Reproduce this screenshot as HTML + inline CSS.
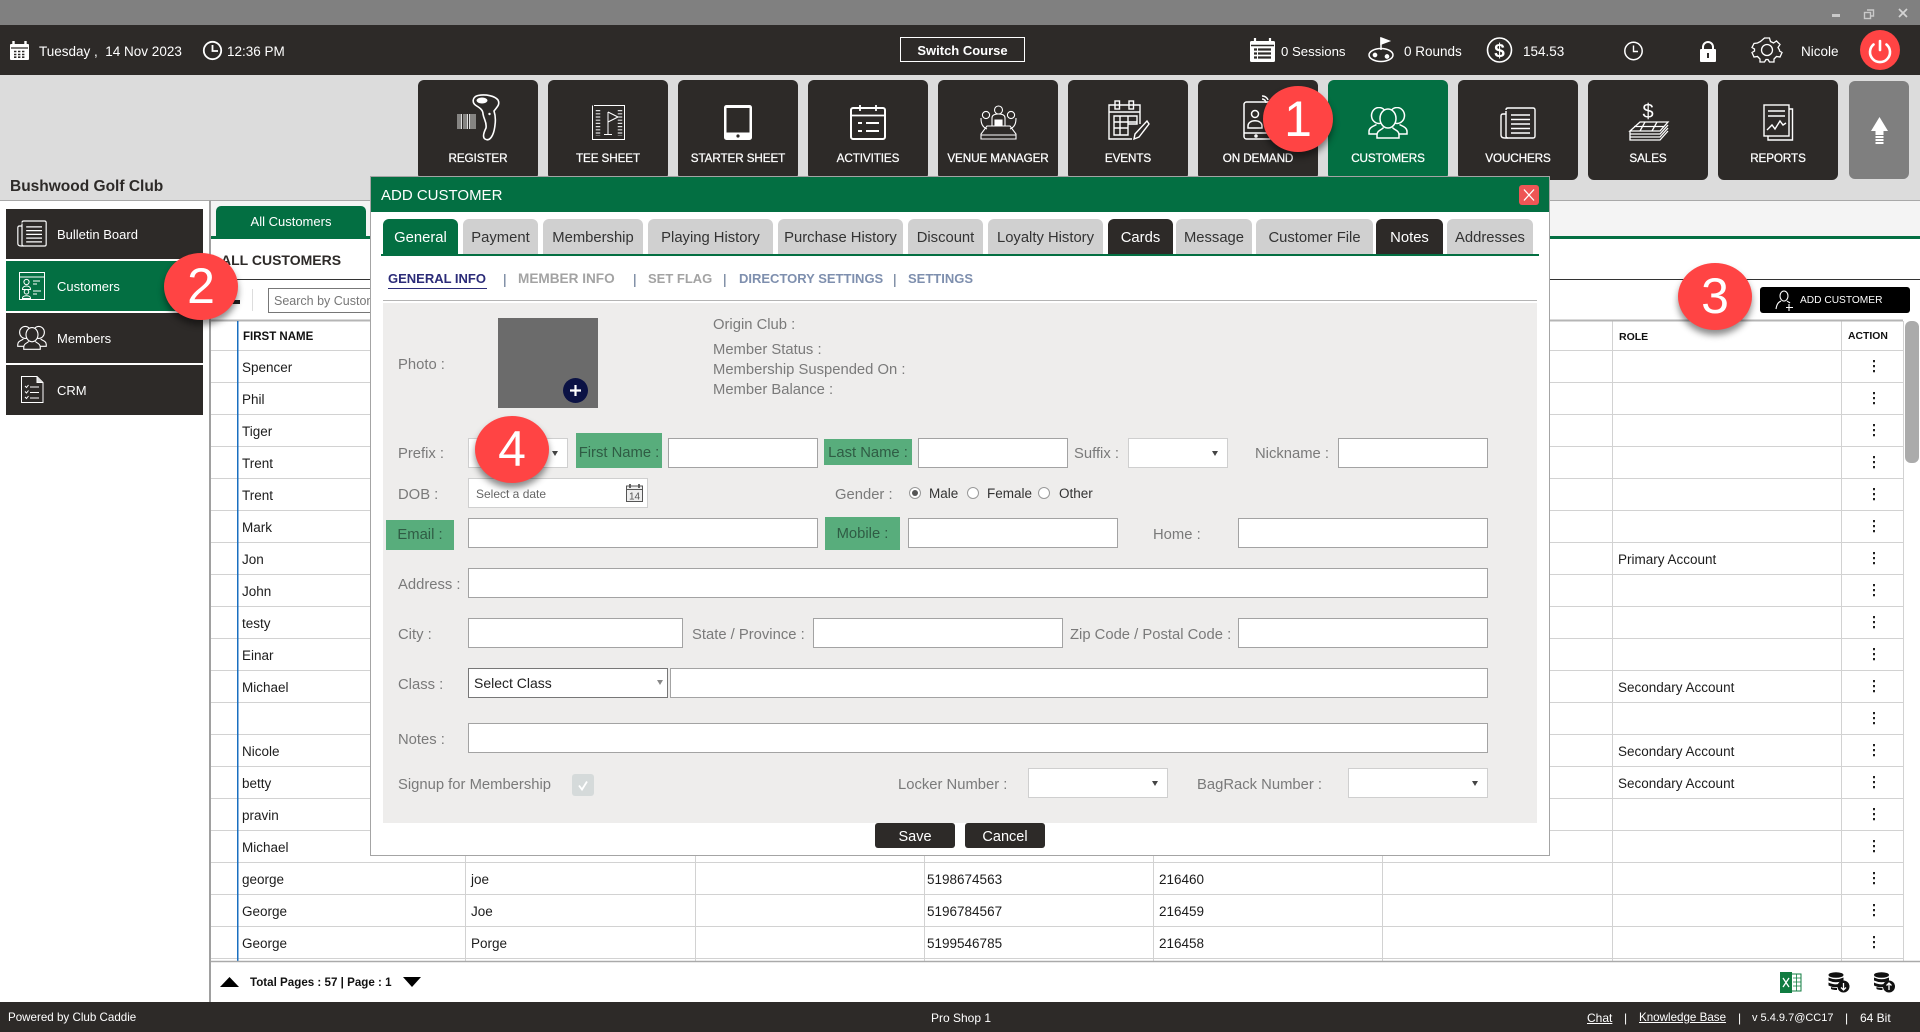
<!DOCTYPE html>
<html><head><meta charset="utf-8"><title>Add Customer</title>
<style>
html,body{margin:0;padding:0;width:1920px;height:1032px;overflow:hidden;background:#fff}
body{font-family:"Liberation Sans",sans-serif;position:relative;color:#222}
div{box-sizing:border-box}
.a{position:absolute}
.t{position:absolute;white-space:nowrap;line-height:20px;height:20px;margin-top:1px}
.w{color:#fff}
.nb{position:absolute;top:80px;width:120px;height:100px;background:#2d2a28;border-radius:6px;color:#fff;font-size:11.7px;letter-spacing:-.1px;text-align:center;padding-top:70px;line-height:18px;-webkit-text-stroke:.25px #fff}
.side{position:absolute;left:6px;width:197px;height:50px;background:#2d2a28;color:#fff;font-size:13px;line-height:52px;padding-left:51px}
.r{font-size:13.5px;color:#1c1c1c}
.tab{position:absolute;top:219px;height:35px;background:#d0d0d0;border-radius:6px 6px 0 0;color:#333;font-size:14.8px;line-height:39px;text-align:center;white-space:nowrap}
.tab.d{background:#2d2a28;color:#fff}
.l{color:#7a7a7a;font-size:14.8px}
.g{position:absolute;background:#58ad7c;color:#2f5c44;font-size:14.8px;display:flex;align-items:center;justify-content:center;white-space:nowrap}
.i{position:absolute;height:30px;background:#fff;border:1px solid #a3a3a3}
.s{border-color:#cfcfcf}
.c{position:absolute;width:0;height:0;border-left:3px solid transparent;border-right:3px solid transparent;border-top:5px solid #444}
.sub{position:absolute;top:269px;font-size:13px;font-weight:bold;line-height:20px;white-space:nowrap}
.bar{position:absolute;top:269px;font-size:14px;color:#5c6f8c;line-height:20px}
.rb{position:absolute;width:12px;height:12px;border-radius:50%;border:1px solid #999;background:#fff;top:487px}
.btn{position:absolute;top:823px;height:25px;width:80px;background:#2d2a28;border-radius:3px;color:#fff;font-size:14.5px;line-height:28px;text-align:center}
.n{position:absolute;background:#ff4444;border-radius:50%;color:#fff;font-size:50px;text-align:center;box-shadow:0 5px 7px rgba(0,0,0,.45);width:74px;height:67px;line-height:67px;z-index:20}
</style></head><body>

<!-- top bars -->
<div class="a" style="left:0;top:0;width:1920px;height:25px;background:#808080"></div>
<div class="a" style="left:0;top:25px;width:1920px;height:50px;background:#2d2a28"></div>
<div class="a" style="left:0;top:75px;width:1920px;height:125px;background:#dcdcdc"></div>
<div class="a" style="left:0;top:200px;width:1920px;height:1px;background:#a8a8a8"></div>

<div class="t w" style="left:39px;top:41px;font-size:13.5px">Tuesday ,&nbsp; 14 Nov 2023</div>
<div class="t w" style="left:227px;top:41px;font-size:13.5px">12:36 PM</div>
<div class="a w" style="left:900px;top:37px;width:125px;height:25px;border:1px solid #fff;font-size:13px;font-weight:bold;text-align:center;line-height:25px">Switch Course</div>
<div class="t w" style="left:1281px;top:41px;font-size:13.2px">0 Sessions</div>
<div class="t w" style="left:1404px;top:41px;font-size:13.5px">0 Rounds</div>
<div class="t w" style="left:1523px;top:41px;font-size:13.5px">154.53</div>
<div class="t w" style="left:1801px;top:41px;font-size:13.5px">Nicole</div>
<div class="a" style="left:1860px;top:30px;width:40px;height:40px;border-radius:50%;background:#ff4444"></div>

<div class="t" style="left:10px;top:176px;font-size:15.5px;font-weight:bold;color:#2d2a28">Bushwood Golf Club</div>

<!-- nav buttons -->
<div class="nb" style="left:418px">REGISTER</div>
<div class="nb" style="left:548px">TEE SHEET</div>
<div class="nb" style="left:678px">STARTER SHEET</div>
<div class="nb" style="left:808px">ACTIVITIES</div>
<div class="nb" style="left:938px">VENUE MANAGER</div>
<div class="nb" style="left:1068px">EVENTS</div>
<div class="nb" style="left:1198px">ON DEMAND</div>
<div class="nb" style="left:1328px;background:#036f42">CUSTOMERS</div>
<div class="nb" style="left:1458px">VOUCHERS</div>
<div class="nb" style="left:1588px">SALES</div>
<div class="nb" style="left:1718px">REPORTS</div>
<div class="a" style="left:1849px;top:81px;width:60px;height:98px;background:#7f7f7f;border-radius:6px"></div>

<!-- sidebar -->
<div class="a" style="left:209px;top:200px;width:2px;height:802px;background:#a0a0a0"></div>
<div class="side" style="top:209px">Bulletin Board</div>
<div class="side" style="top:261px;background:#036f42">Customers</div>
<div class="side" style="top:313px">Members</div>
<div class="side" style="top:365px">CRM</div>

<!-- content header -->
<div class="a" style="left:211px;top:201px;width:1709px;height:35px;background:#f4f4f4"></div>
<div class="a" style="left:211px;top:236px;width:1709px;height:3px;background:#036f42"></div>
<div class="a w" style="left:216px;top:206px;width:150px;height:31px;background:#036f42;border-radius:5px 5px 0 0;font-size:13px;text-align:center;line-height:32px">All Customers</div>
<div class="t" style="left:221px;top:249px;font-size:14px;font-weight:bold;color:#2d2a28">ALL CUSTOMERS</div>
<div class="a" style="left:211px;top:279px;width:1709px;height:1px;background:#333"></div>
<div class="a" style="left:252px;top:289px;width:1px;height:22px;background:#ddd"></div>
<div class="a" style="left:268px;top:288px;width:160px;height:25px;border:1px solid #777;color:#777;font-size:12.5px;line-height:24px;padding-left:5px;white-space:nowrap;overflow:hidden">Search by Customer</div>
<div class="a" style="left:232px;top:300px;width:8px;height:4px;background:#222"></div>
<div class="a" style="left:1760px;top:287px;width:150px;height:26px;background:#000;border-radius:3px;color:#fff;font-size:10.2px;line-height:27px;padding-left:40px;white-space:nowrap">ADD CUSTOMER</div>

<!-- grid -->
<svg class="a" style="left:0;top:0" width="1920" height="1032">
<g stroke="#d2d2d2" stroke-width="1" shape-rendering="crispEdges">
<path d="M211 350.5H1903M211 382.5H1903M211 414.5H1903M211 446.5H1903M211 478.5H1903M211 510.5H1903M211 542.5H1903M211 574.5H1903M211 606.5H1903M211 638.5H1903M211 670.5H1903M211 702.5H1903M211 734.5H1903M211 766.5H1903M211 798.5H1903M211 830.5H1903M211 862.5H1903M211 894.5H1903M211 926.5H1903M211 958.5H1903"/>
<path d="M465.5 321V961M695.5 321V961M924.5 321V961M1153.5 321V961M1382.5 321V961M1612.5 321V961M1841.5 321V961M1903.5 321V961"/>
</g>
<path d="M211 320.5H1903" stroke="#b5b5b5" stroke-width="2"/>
<path d="M237.5 321V961" stroke="#1a6fc0" stroke-width="1.5" shape-rendering="crispEdges"/>
<path d="M211 961.5H1920" stroke="#aaa" stroke-width="1.5"/>
<!-- scrollbar -->
<rect x="1905" y="321" width="14" height="142" rx="6" fill="#ababab"/>
</svg>

<div class="t" style="left:243px;top:326px;font-size:11.5px;font-weight:bold;color:#111">FIRST NAME</div>
<div class="t" style="left:1619px;top:326px;font-size:10.5px;font-weight:bold;color:#111">ROLE</div>
<div class="t" style="left:1848px;top:326px;font-size:10.4px;font-weight:bold;color:#111">ACTION</div>

<div class="t r" style="left:242px;top:357px">Spencer</div>
<div class="t r" style="left:242px;top:389px">Phil</div>
<div class="t r" style="left:242px;top:421px">Tiger</div>
<div class="t r" style="left:242px;top:453px">Trent</div>
<div class="t r" style="left:242px;top:485px">Trent</div>
<div class="t r" style="left:242px;top:517px">Mark</div>
<div class="t r" style="left:242px;top:549px">Jon</div>
<div class="t r" style="left:242px;top:581px">John</div>
<div class="t r" style="left:242px;top:613px">testy</div>
<div class="t r" style="left:242px;top:645px">Einar</div>
<div class="t r" style="left:242px;top:677px">Michael</div>
<div class="t r" style="left:242px;top:741px">Nicole</div>
<div class="t r" style="left:242px;top:773px">betty</div>
<div class="t r" style="left:242px;top:805px">pravin</div>
<div class="t r" style="left:242px;top:837px">Michael</div>
<div class="t r" style="left:242px;top:869px">george</div>
<div class="t r" style="left:242px;top:901px">George</div>
<div class="t r" style="left:242px;top:933px">George</div>
<div class="t r" style="left:471px;top:869px">joe</div>
<div class="t r" style="left:471px;top:901px">Joe</div>
<div class="t r" style="left:471px;top:933px">Porge</div>
<div class="t r" style="left:927px;top:869px">5198674563</div>
<div class="t r" style="left:927px;top:901px">5196784567</div>
<div class="t r" style="left:927px;top:933px">5199546785</div>
<div class="t r" style="left:1159px;top:869px">216460</div>
<div class="t r" style="left:1159px;top:901px">216459</div>
<div class="t r" style="left:1159px;top:933px">216458</div>
<div class="t r" style="left:1618px;top:549px">Primary Account</div>
<div class="t r" style="left:1618px;top:677px">Secondary Account</div>
<div class="t r" style="left:1618px;top:741px">Secondary Account</div>
<div class="t r" style="left:1618px;top:773px">Secondary Account</div>

<svg class="a" style="left:1870px;top:350px" width="8" height="610"><g fill="#222">
<path id="d" d="M3 10h2v2.2H3zM3 15h2v2.2H3zM3 20h2v2.2H3z"/>
<use href="#d" y="32"/><use href="#d" y="64"/><use href="#d" y="96"/><use href="#d" y="128"/><use href="#d" y="160"/><use href="#d" y="192"/><use href="#d" y="224"/><use href="#d" y="256"/><use href="#d" y="288"/><use href="#d" y="320"/><use href="#d" y="352"/><use href="#d" y="384"/><use href="#d" y="416"/><use href="#d" y="448"/><use href="#d" y="480"/><use href="#d" y="512"/><use href="#d" y="544"/><use href="#d" y="576"/>
</g></svg>

<!-- pagination -->
<svg class="a" style="left:215px;top:970px" width="215" height="24">
<path d="M5 17L14.5 7L24 17Z" fill="#000"/><path d="M188 7H206L197 17Z" fill="#000"/></svg>
<div class="t" style="left:250px;top:973px;margin-top:0;font-size:11.6px;font-weight:bold;color:#111">Total Pages : 57 | Page : 1</div>

<!-- footer -->
<div class="a" style="left:0;top:1002px;width:1920px;height:30px;background:#2d2a28"></div>
<div class="t w" style="left:8px;top:1008px;margin-top:0;font-size:11.6px">Powered by Club Caddie</div>
<div class="t w" style="left:931px;top:1008px;margin-top:0;font-size:12px">Pro Shop 1</div>
<div class="t w" style="left:1587px;top:1008px;margin-top:0;font-size:12px"><u>Chat</u></div>
<div class="t w" style="left:1624px;top:1008px;margin-top:0;font-size:12px">|</div>
<div class="t w" style="left:1639px;top:1008px;margin-top:0;font-size:11.6px"><u>Knowledge Base</u></div>
<div class="t w" style="left:1738px;top:1008px;margin-top:0;font-size:12px">|</div>
<div class="t w" style="left:1752px;top:1008px;margin-top:0;font-size:11px">v 5.4.9.7@CC17</div>
<div class="t w" style="left:1845px;top:1008px;margin-top:0;font-size:12px">|</div>
<div class="t w" style="left:1860px;top:1008px;margin-top:0;font-size:12px">64 Bit</div>

<!-- icons layer -->
<svg class="a" style="left:0;top:0" width="1920" height="1032">
<defs>
<symbol id="news" viewBox="0 0 36 32"><g fill="none" stroke="#fff" stroke-width="1.4"><path d="M6 4V29Q6 31 8 31H33Q35 31 35 29V3Q35 1 33 1H8Q6 1 6 3"/><path d="M6 7H3Q1 7 1 9V28Q1 31 5 31H8"/><path stroke-width="1.5" d="M11 8H30M11 12.5H30M11 17H30M11 21.5H30M11 26H30"/></g></symbol>
<symbol id="ppl" viewBox="0 0 40 32"><g stroke="#fff" stroke-width="1.5" fill="none">
<ellipse cx="11" cy="8.5" rx="7.5" ry="8"/><ellipse cx="29" cy="8.5" rx="7.5" ry="8"/>
<path d="M9 27H1V24.5C1 20.5 5 19.5 8.5 17.5M31 27H39V24.5C39 20.5 35 19.5 31.5 17.5"/>
<ellipse cx="20" cy="11.5" rx="8" ry="9.5" fill="currentColor"/>
<path d="M15.5 20.5C14 23 9 23 9 28V31H31V28C31 23 26 23 24.5 20.5"/>
</g></symbol>
</defs>

<!-- header icons -->
<g>
<rect x="10" y="44" width="19" height="16" rx="1" fill="#fff"/>
<path d="M13.5 41v5M25.5 41v5" stroke="#fff" stroke-width="2.4"/>
<path d="M11 48H28" stroke="#2d2a28" stroke-width="1.2"/>
<path d="M14 51.5h11M14 54.5h11M14 57.2h11" stroke="#2d2a28" stroke-width="1.6" stroke-dasharray="2.4 1.6"/>
</g>
<circle cx="212.5" cy="50.5" r="8.7" fill="none" stroke="#fff" stroke-width="1.8"/>
<path d="M212.5 45V51H218" fill="none" stroke="#fff" stroke-width="1.8"/>

<g>
<rect x="1250" y="41" width="25" height="21" rx="1.5" fill="#fff"/>
<path d="M1255 38v6M1270 38v6" stroke="#fff" stroke-width="2.2"/>
<path d="M1251 45.5H1274" stroke="#2d2a28" stroke-width="1.4"/>
<path d="M1254 49.5H1271M1254 53.5H1271M1254 57.5H1271" stroke="#2d2a28" stroke-width="2.2"/>
<path d="M1257.5 48V59" stroke="#fff" stroke-width="1"/>
</g>
<g fill="none" stroke="#fff" stroke-width="1.5">
<ellipse cx="1381" cy="55" rx="12" ry="6.5"/>
<path d="M1381 50V38"/>
<path d="M1381 38L1389 41L1381 44Z" fill="#fff"/>
<circle cx="1375" cy="55" r="1.6" fill="#fff"/><circle cx="1387" cy="56.5" r="1.6" fill="#fff"/>
</g>
<circle cx="1499.5" cy="50" r="12" fill="none" stroke="#fff" stroke-width="1.6"/>
<text x="1499.5" y="57" text-anchor="middle" fill="#fff" font-size="19" font-weight="bold" font-family="Liberation Sans">$</text>
<circle cx="1633.5" cy="51" r="8.7" fill="none" stroke="#fff" stroke-width="1.5"/>
<path d="M1633.5 45.5V51.5H1638" fill="none" stroke="#fff" stroke-width="1.4"/>
<path d="M1703 50V47a5 5 0 0 1 10 0V50" fill="none" stroke="#fff" stroke-width="2"/>
<rect x="1700" y="49" width="16" height="13" rx="1" fill="#fff"/>
<rect x="1707" y="53" width="2" height="5" fill="#2d2a28"/>
<g fill="none" stroke="#fff" stroke-width="1.3">
<circle cx="1767" cy="50" r="5.5"/>
<path d="M1764.5 38H1769.5L1770.5 41.5L1773.5 43L1776.5 41L1780 44.5L1778 47.5L1779.5 50V51L1782 52.5L1780 57L1776.5 56.5L1774 59L1774 62H1769.5L1768 59.5H1766L1764.5 62H1760L1760 59L1757.5 56.5L1754 57L1752 52.5L1754.5 51V49L1752 47.5L1754 43.5L1757.5 43L1760.5 41.5Z"/>
</g>
<path d="M1880 41V50" stroke="#fff" stroke-width="2.6" stroke-linecap="round"/>
<path d="M1873.5 44.5a10 10 0 1 0 13 0" fill="none" stroke="#fff" stroke-width="2.6" stroke-linecap="round"/>

<!-- window controls -->
<rect x="1832" y="14" width="8" height="3" fill="#c9c9c9"/>
<g fill="none" stroke="#c9c9c9" stroke-width="1.4"><rect x="1864.5" y="12.5" width="6" height="6"/><path d="M1867 10H1873.5V16H1871"/></g>
<path d="M1899 9L1907 17M1907 9L1899 17" stroke="#d4d4d4" stroke-width="1.7"/>

<!-- register -->
<path d="M458 114V129M460 114V129M461.5 114V129M464 114V129M466 114V129M467.5 114V129M469.5 114V129M471 114V129M473 114V129M475 114V129" stroke="#ddd" stroke-width="1"/>
<path d="M478 95.5C472 97 472 103 476 105.5C480 108 483 110 483 114C484 120 487 122 486 128C484 132 482 137 485 139C490 142 494 135 495 125C496 118 495 114 494 111C498 106 500 104 498 100C495 96 486 94 478 95.5Z" fill="none" stroke="#fff" stroke-width="1.6"/>
<ellipse cx="482" cy="100.5" rx="5.5" ry="3" fill="#fff"/>
<circle cx="489.5" cy="114" r="1.2" fill="#fff"/>

<!-- tee sheet -->
<path d="M594 105.5H624.5V139.5H592.5V105.5" fill="none" stroke="#fff" stroke-width="1"/>
<path d="M608 112V134M604 134.5H612" stroke="#fff" stroke-width="1"/>
<path d="M608 112L618 117L608 122" fill="none" stroke="#fff" stroke-width="1.1"/>
<path d="M598 110V136M620 110V136" stroke="#ddd" stroke-width="4.5" stroke-dasharray="1.2 2"/>

<!-- starter -->
<rect x="724" y="105" width="28" height="35" rx="2.5" fill="#fff"/>
<rect x="726.5" y="108" width="23" height="24.5" fill="#2d2a28"/>
<circle cx="738" cy="136" r="1.6" fill="#2d2a28"/>

<!-- activities -->
<rect x="851" y="108" width="34" height="31" rx="2" fill="none" stroke="#fff" stroke-width="2"/>
<path d="M851 115.5H885M860 105V111M876 105V111" stroke="#fff" stroke-width="1.8"/>
<path d="M858 123H862M866 123H879M858 131H862M866 131H879" stroke="#fff" stroke-width="2"/>

<!-- venue -->
<g fill="none" stroke="#fff" stroke-width="1.1">
<circle cx="986" cy="115" r="3.6"/><circle cx="998.5" cy="110" r="4"/><circle cx="1011" cy="115" r="3.6"/>
<path d="M992 126V118C992 115 995 114 998.5 114C1002 114 1005 115 1005 118V126"/>
<path d="M981 118C981 123 982 127 987 129M1016 118C1016 123 1015 127 1010 129"/>
<path d="M987 126H1010L1016 134V139H981V134Z"/>
<path d="M981 135H1016"/>
<path d="M995 120H1002V126H995Z" fill="#fff"/>
</g>

<!-- events -->
<g fill="none" stroke="#fff" stroke-width="1.4">
<path d="M1140 124V105H1109V139H1132"/>
<path d="M1109 112H1140"/>
<rect x="1115" y="101" width="4.5" height="8"/><rect x="1129" y="101" width="4.5" height="8"/>
<path d="M1114 116H1137V124H1128V135H1114ZM1114 122H1137M1114 128H1128M1120 116V135M1128 116V124"/>
<path d="M1147 121L1149 124L1139 137L1134 139L1135 134Z"/>
</g>

<!-- on demand -->
<g fill="none" stroke="#fff" stroke-width="1.5">
<rect x="1244" y="102" width="28" height="37" rx="2.5"/>
<path d="M1244 133H1272"/><circle cx="1256" cy="136" r="1"/>
<circle cx="1255" cy="114" r="3.5"/><path d="M1248 126C1248 119 1262 119 1262 126V128H1248Z"/>
<path d="M1262 96A6 6 0 0 1 1268 100M1262 99A4 4 0 0 1 1266 103"/>
</g>

<use href="#ppl" x="1368" y="107" width="40" height="32" color="#036f42"/>
<use href="#news" x="1500" y="107" width="36" height="32"/>

<!-- sales -->
<text x="1648" y="118" text-anchor="middle" fill="#fff" font-size="20" font-family="Liberation Sans">$</text>
<g fill="none" stroke="#fff" stroke-width="1.3">
<path d="M1640 122H1668L1660 131H1630Z"/>
<path d="M1630 131V134H1660L1668 125M1630 134V137H1660L1668 128M1630 137V140H1660L1668 131"/>
<path d="M1640 131L1645 122M1652 131L1657 122M1634 126.5H1664"/>
</g>

<!-- reports -->
<g fill="none" stroke="#fff" stroke-width="1.4">
<rect x="1764" y="105" width="25" height="31"/>
<path d="M1789 109H1792.5V140H1768V136"/>
<path d="M1768 111H1785M1768 116H1785"/>
<path d="M1767 130L1772 125L1775 129L1780 121L1783 125L1786 123"/>
</g>

<!-- arrow -->
<path d="M1879.5 117L1888 131H1883.5V135H1875.5V131H1871Z" fill="#fff"/>
<path d="M1875.5 137H1883.5M1875.5 140H1883.5M1875.5 143H1883.5" stroke="#fff" stroke-width="2"/>

<!-- sidebar icons -->
<use href="#news" x="17" y="220" width="30" height="27"/>
<g fill="none" stroke="#fff" stroke-width="1">
<rect x="19.5" y="272.5" width="25" height="27"/>
<path d="M19.5 277H44.5"/>
<circle cx="26.5" cy="282" r="2.6"/><path d="M22.5 289C22.5 285 30.5 285 30.5 289V289.5H22.5Z"/>
<circle cx="26.5" cy="291.8" r="2.3"/><path d="M22.5 298C22.5 295 30.5 295 30.5 298V298.5H22.5Z"/>
<path d="M33 281H40M33 284H37M33 291H41M33 294H37"/>
</g>
<use href="#ppl" x="17" y="325" width="30" height="26" color="#2d2a28"/>
<g fill="none" stroke="#fff" stroke-width="1">
<path d="M21.5 376.5H37L43 382.5V402.5H21.5Z"/>
<path d="M37 376.5V382.5H43" fill="#ddd"/>
<path d="M25 386L26.5 387.5L28.5 385M25 391.5L26.5 393L28.5 390.5M25 397L26.5 398.5L28.5 396M30 387H39M30 392.5H39M30 398H39"/>
</g>

<!-- add customer icon -->
<g fill="none" stroke="#fff" stroke-width="1.1">
<ellipse cx="1784" cy="296" rx="4" ry="5"/>
<path d="M1776 309C1777 303 1779 302 1781 301M1787 301C1788 302 1789 302 1790 303"/>
<path d="M1789 304V311M1786 307.5H1793"/>
</g>

<!-- footer right icons -->
<rect x="1780" y="972" width="12" height="21" fill="#107c41"/>
<path d="M1792 974H1801V991H1792" fill="#fff" stroke="#107c41" stroke-width="1"/>
<path d="M1793 978H1801M1793 982H1801M1793 986H1801M1796.5 974V991" stroke="#107c41" stroke-width=".8"/>
<path d="M1783 978L1789 987M1789 978L1783 987" stroke="#fff" stroke-width="1.3"/>
<g fill="#111">
<ellipse cx="1836" cy="975" rx="7.5" ry="2.8"/><path d="M1828.5 977.5Q1836 981 1843.5 977.5V980.5Q1836 984 1828.5 980.5ZM1828.5 982.5Q1836 986 1841 983V985.5Q1836 989 1828.5 985.5ZM1831 987Q1833 988 1837 988V990Q1833 990 1831 989Z"/>
<circle cx="1843.5" cy="986.5" r="6"/>
<ellipse cx="1881.5" cy="975" rx="7.5" ry="2.8"/><path d="M1874 977.5Q1881.5 981 1889 977.5V980.5Q1881.5 984 1874 980.5ZM1874 982.5Q1881.5 986 1886.5 983V985.5Q1881.5 989 1874 985.5ZM1876.5 987Q1878.5 988 1882.5 988V990Q1878.5 990 1876.5 989Z"/>
<circle cx="1889" cy="986.5" r="6"/>
</g>
<path d="M1843.5 983V990M1841 987.5L1843.5 990L1846 987.5" fill="none" stroke="#fff" stroke-width="1.3"/>
<path d="M1889 990V983M1886.5 985.5L1889 983L1891.5 985.5" fill="none" stroke="#fff" stroke-width="1.3"/>
</svg>

<!-- dialog -->
<div class="a" style="left:370px;top:176px;width:1180px;height:680px;background:#fff;border:1px solid #a4a4a4;z-index:5"></div>
<div style="position:absolute;left:0;top:0;z-index:6;width:1920px;height:1032px">
<div class="a" style="left:371px;top:177px;width:1178px;height:35px;background:#036f42"></div>
<div class="t w" style="left:381px;top:185px;font-size:15px">ADD CUSTOMER</div>
<div class="a" style="left:1519px;top:185px;width:20px;height:20px;background:#ee5555;border-radius:3px"></div>
<svg class="a" style="left:1519px;top:185px" width="20" height="20"><path d="M5 4.5L15 15.5M15 4.5L5 15.5" stroke="#fff" stroke-width="1.3"/></svg>

<div class="tab" style="left:383px;width:75px;background:#036f42;color:#fff">General</div>
<div class="tab" style="left:463px;width:75px">Payment</div>
<div class="tab" style="left:543px;width:100px">Membership</div>
<div class="tab" style="left:648px;width:125px">Playing History</div>
<div class="tab" style="left:778px;width:125px">Purchase History</div>
<div class="tab" style="left:908px;width:75px">Discount</div>
<div class="tab" style="left:988px;width:115px">Loyalty History</div>
<div class="tab d" style="left:1108px;width:65px">Cards</div>
<div class="tab" style="left:1176px;width:76px">Message</div>
<div class="tab" style="left:1256px;width:117px">Customer File</div>
<div class="tab d" style="left:1376px;width:67px">Notes</div>
<div class="tab" style="left:1447px;width:86px">Addresses</div>
<div class="a" style="left:381px;top:254px;width:1158px;height:2px;background:#036f42"></div>

<div class="sub" style="left:388px;color:#2b2b78">GENERAL INFO</div>
<div class="a" style="left:388px;top:288px;width:99px;height:1px;background:#2b2b78"></div>
<div class="bar" style="left:503px">|</div>
<div class="sub" style="left:518px;font-size:13.6px;color:#a3a3a3">MEMBER INFO</div>
<div class="bar" style="left:633px">|</div>
<div class="sub" style="left:648px;color:#a3a3a3">SET FLAG</div>
<div class="bar" style="left:723px">|</div>
<div class="sub" style="left:739px;color:#7e8fae">DIRECTORY SETTINGS</div>
<div class="bar" style="left:893px">|</div>
<div class="sub" style="left:908px;color:#7e8fae">SETTINGS</div>
<div class="a" style="left:383px;top:300px;width:1154px;height:1px;background:#b4b4b4"></div>

<div class="a" style="left:383px;top:303px;width:1154px;height:520px;background:#eeedec"></div>

<div class="t l" style="left:398px;top:354px">Photo :</div>
<div class="a" style="left:498px;top:318px;width:100px;height:90px;background:#6b6b6b"></div>
<div class="a" style="left:563px;top:378px;width:25px;height:25px;border-radius:50%;background:#0b1244"></div>
<svg class="a" style="left:563px;top:378px" width="25" height="25"><path d="M12.5 7V18M7 12.5H18" stroke="#fff" stroke-width="2.2"/></svg>

<div class="t l" style="left:713px;top:314px">Origin Club :</div>
<div class="t l" style="left:713px;top:339px">Member Status :</div>
<div class="t l" style="left:713px;top:359px">Membership Suspended On :</div>
<div class="t l" style="left:713px;top:379px">Member Balance :</div>

<div class="t l" style="left:398px;top:443px">Prefix :</div>
<div class="i s" style="left:468px;top:438px;width:100px"></div><div class="c" style="left:552px;top:451px"></div>
<div class="g" style="left:576px;top:433px;width:86px;height:35px;padding-top:5px">First Name :</div>
<div class="i" style="left:668px;top:438px;width:150px"></div>
<div class="g" style="left:824px;top:439px;width:88px;height:26px;padding-top:2px">Last Name :</div>
<div class="i" style="left:918px;top:438px;width:150px"></div>
<div class="t l" style="left:1074px;top:443px">Suffix :</div>
<div class="i s" style="left:1128px;top:438px;width:100px"></div><div class="c" style="left:1212px;top:451px"></div>
<div class="t l" style="left:1255px;top:443px">Nickname :</div>
<div class="i" style="left:1338px;top:438px;width:150px"></div>

<div class="t l" style="left:398px;top:484px">DOB :</div>
<div class="i s" style="left:468px;top:478px;width:180px;font-size:12px;color:#666;line-height:30px;padding-left:7px">Select a date</div>
<svg class="a" style="left:625px;top:483px" width="20" height="20"><g fill="none" stroke="#555" stroke-width="1"><rect x="1.5" y="3" width="16" height="15.5" fill="#eee"/><path d="M1.5 6.5H17.5"/><path d="M5 1V5M14 1V5" stroke-width="1.8"/></g><text x="9.5" y="16.5" text-anchor="middle" font-size="10" fill="#555" font-family="Liberation Sans">14</text></svg>
<div class="t l" style="left:835px;top:484px">Gender :</div>
<div class="rb" style="left:909px"></div><div class="a" style="left:912px;top:490px;width:6px;height:6px;border-radius:50%;background:#555"></div>
<div class="t" style="left:929px;top:483px;font-size:13.5px;color:#333">Male</div>
<div class="rb" style="left:967px"></div>
<div class="t" style="left:987px;top:483px;font-size:13.5px;color:#333">Female</div>
<div class="rb" style="left:1038px"></div>
<div class="t" style="left:1059px;top:483px;font-size:13.5px;color:#333">Other</div>

<div class="g" style="left:386px;top:520px;width:68px;height:30px">Email :</div>
<div class="i" style="left:468px;top:518px;width:350px"></div>
<div class="g" style="left:825px;top:517px;width:75px;height:33px">Mobile :</div>
<div class="i" style="left:908px;top:518px;width:210px"></div>
<div class="t l" style="left:1153px;top:524px">Home :</div>
<div class="i" style="left:1238px;top:518px;width:250px"></div>

<div class="t l" style="left:398px;top:574px">Address :</div>
<div class="i" style="left:468px;top:568px;width:1020px"></div>

<div class="t l" style="left:398px;top:624px">City :</div>
<div class="i" style="left:468px;top:618px;width:215px"></div>
<div class="t l" style="left:692px;top:624px">State / Province :</div>
<div class="i" style="left:813px;top:618px;width:250px"></div>
<div class="t l" style="left:1070px;top:624px">Zip Code / Postal Code :</div>
<div class="i" style="left:1238px;top:618px;width:250px"></div>

<div class="t l" style="left:398px;top:674px">Class :</div>
<div class="i" style="left:468px;top:668px;width:200px;border-color:#777;font-size:14px;color:#222;line-height:28px;padding-left:5px">Select Class</div><div class="c" style="left:657px;top:680px;border-top-color:#888"></div>
<div class="i" style="left:670px;top:668px;width:818px"></div>

<div class="t l" style="left:398px;top:729px">Notes :</div>
<div class="i" style="left:468px;top:723px;width:1020px"></div>

<div class="t l" style="left:398px;top:774px">Signup for Membership</div>
<div class="a" style="left:572px;top:774px;width:22px;height:22px;background:#d5dada;border-radius:3px"></div>
<svg class="a" style="left:572px;top:774px" width="22" height="22"><path d="M7 11.5L10 15.5L15 7.5" fill="none" stroke="#fff" stroke-width="1.8"/></svg>
<div class="t l" style="left:898px;top:774px">Locker Number :</div>
<div class="i s" style="left:1028px;top:768px;width:140px"></div><div class="c" style="left:1152px;top:781px"></div>
<div class="t l" style="left:1197px;top:774px">BagRack Number :</div>
<div class="i s" style="left:1348px;top:768px;width:140px"></div><div class="c" style="left:1472px;top:781px"></div>

<div class="btn" style="left:875px">Save</div>
<div class="btn" style="left:965px">Cancel</div>
</div>

<!-- number callouts -->
<div class="n" style="left:1263px;top:86px;width:70px;height:66px;line-height:66px">1</div>
<div class="n" style="left:164px;top:253px">2</div>
<div class="n" style="left:1678px;top:263px">3</div>
<div class="n" style="left:475px;top:416px">4</div>

</body></html>
